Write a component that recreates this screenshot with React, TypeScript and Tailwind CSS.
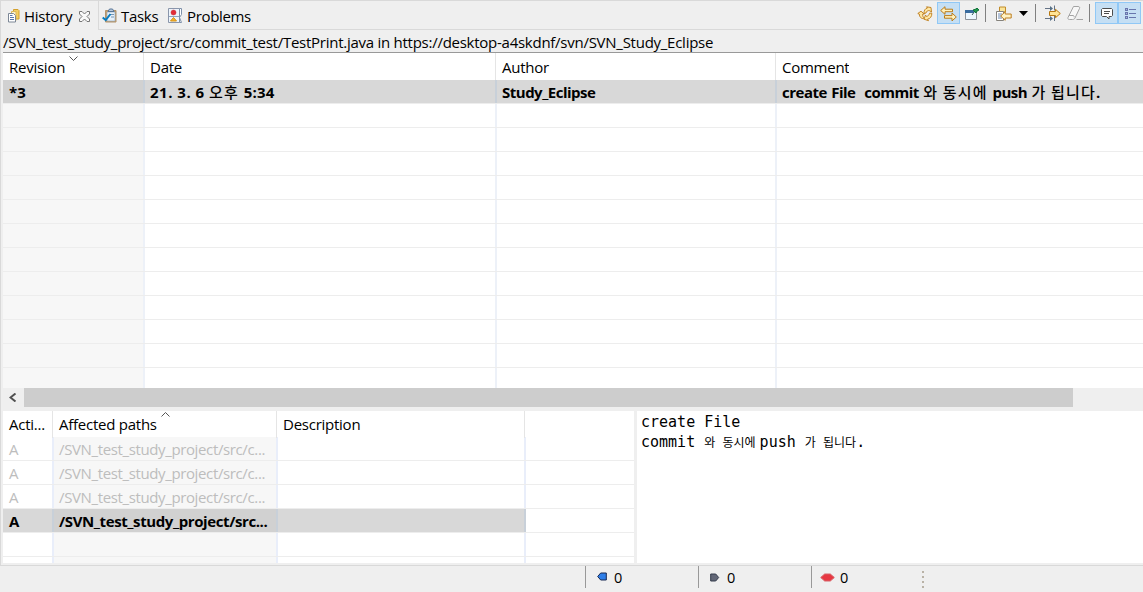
import type { ReactNode } from "react";

const CELL = "shrink-0 overflow-hidden whitespace-pre pl-[6px]";
const BODY_CELL = "shrink-0 overflow-hidden whitespace-pre pl-[5px]";

function Chevron({ up = false }: { up?: boolean }) {
  return (
    <svg width="9" height="5" viewBox="0 0 9 5" fill="none" stroke="#555" strokeWidth="1">
      <path d={up ? "M.5 4.5 4.5.5l4 4" : "M.5.5l4 4 4-4"} />
    </svg>
  );
}

function HistoryIcon() {
  return (
    <svg width="13" height="16" viewBox="0 0 13 16">
      <path d="M5.500 1.500h4.500l1 1v8.500h-5.500z" fill="#f4cf63" stroke="#d3a02e" />
      <path d="M3.500 3.500h4.500v9h-4.500z" fill="#fff4c8" stroke="#d9b75c" />
      <path d="M.5 5.500h5l2 2v6.500h-7z" fill="#fff" stroke="#7c8796" />
      <path d="M2 7.500h2.500M2 9.500h4M2 11.500h4" stroke="#5878ad" />
    </svg>
  );
}

function TasksIcon() {
  return (
    <svg width="16" height="16" viewBox="0 0 16 16">
      <path d="M3.500 2.500h10.500v11.500h-10.500z" fill="#c9a06c" stroke="#b3946c" />
      <path d="M5 4h8v9H5z" fill="#e5f0fa" stroke="#8ca4be" strokeWidth=".6" />
      <path d="M6 3.500 7.500 1h3L12 3.500z" fill="#b9cadd" stroke="#587596" />
      <path d="M8 6.500h4M9 9h3" stroke="#7994b2" />
      <path d="M.7 9.500 3.700 12l4.800-6" fill="none" stroke="#087dbf" strokeWidth="2" />
    </svg>
  );
}

function ProblemsIcon() {
  return (
    <svg width="15" height="16" viewBox="0 0 15 16">
      <path d="M.5.5h11v14H.5z" fill="#edf4fb" stroke="#8a96ab" />
      <path d="M11.500.5h2v6l-2 3 2 5h-2z" fill="#fff" stroke="#7e91aa" />
      <path d="M1 8.500h10" stroke="#91a5bd" />
      <circle cx="5.500" cy="4.500" r="2.500" fill="#e12d38" stroke="#c72835" strokeWidth=".5" />
      <path d="m5.500 9.500 3 3.500h-6z" fill="#f5b52c" stroke="#d69017" />
    </svg>
  );
}

function CloseIcon() {
  return (
    <svg width="11" height="11" viewBox="0 0 11 11" fill="#fafafa" stroke="#777" strokeWidth="1">
      <path d="M.5.500h2.500l2.500 2.500L8 .5h2.500V3L8 5.500 10.500 8v2.500H8L5.500 8 3 10.500H.5V8L3 5.500.5 3z" />
    </svg>
  );
}

function RefreshIcon() {
  return (
    <svg width="16" height="16" viewBox="0 0 16 16" fill="#ffe7a3" stroke="#bd7c18" strokeWidth=".9">
      <path d="M7 7.500C7 4.500 8 2.500 10.500 2L9.500.8 14 1.500 14.500 6l-1.700-1.200C10.500 4 9.500 5.500 9 7z" />
      <path d="M.8 7.500 4 5.200 7.200 8 5.500 8.300c.2 2 .8 3.200 2 4.200C4.500 13.200 2.300 11 2.300 8z" />
      <path d="M14.800 7.200c.2 3.300-1.600 5.500-4.300 6l1 1.500-4.500-1.500L8.500 9l1 1.500c1.800-.5 2.800-1.700 3-3.300z" />
    </svg>
  );
}

function LinkIcon() {
  return (
    <svg width="17" height="16" viewBox="0 0 17 16" fill="#fff1bd" stroke="#b97a18">
      <path d="M.7 4.500 5 .7v2.500h7.500v2.500H5v2.600z" />
      <path d="m16.300 11-4.300-4v2.600H4.500v2.600H12v2.700z" />
    </svg>
  );
}

function PinIcon() {
  return (
    <svg width="15" height="14" viewBox="0 0 15 14">
      <path d="M.5 3.500h11v9H.5z" fill="#edf7ff" stroke="#8c9299" />
      <path d="M0 3h9v3H0z" fill="#386b9f" />
      <path d="m7 8 3-4" stroke="#315f56" />
      <path d="m8 3 3 3 1-2 2-1-2-2-1 1z" fill="#20984f" stroke="#13743b" />
    </svg>
  );
}

function CompareIcon() {
  return (
    <svg width="16" height="16" viewBox="0 0 16 16">
      <path d="M3.500 1h6v5h-6z" fill="#fae499" stroke="#c18c2b" />
      <path d="M.5 5.500h7v9h-7z" fill="#fff" stroke="#85827c" />
      <path d="M2 8h4M2 10h4M2 12h4" stroke="#6a87b1" />
      <path d="m4.700 10 4.500-4.300V8h6v4h-6v2.300z" fill="#fff2c4" stroke="#bd7f20" />
    </svg>
  );
}

function MergeIcon() {
  return (
    <svg width="16" height="16" viewBox="0 0 16 16" fill="none">
      <path d="M0 3.500h6M0 13.500h6M9.500.5v5M9.500 11v5" stroke="#657386" />
      <path d="m5 1 3 2.500L5 6zM5 11l3 2.500L5 16z" fill="#557087" />
      <path d="M4.500 6.500h6V4.300L15.300 8.500l-4.800 4.200v-2.200h-6z" fill="#ffe496" stroke="#b77811" />
    </svg>
  );
}

function EraserIcon() {
  return (
    <svg width="17" height="15" viewBox="0 0 17 15" fill="#f7f7f7" stroke="#a3a3a3">
      <path d="M6.500.5h4.500c1.500 0 2 1 1.500 2L8 12c-.5 1-1.200 1.500-2.500 1.500H2.500C1 13.500.5 12.500 1 11.500z" />
      <path d="M2 9.500h4c1 0 1.300.8 1 1.700M9.500 13.500H16" fill="none" />
    </svg>
  );
}

function CommentIcon() {
  return (
    <svg width="13" height="13" viewBox="0 0 13 13" fill="#fff" stroke="#4d4d4d">
      <path d="M1.500.5h9l1 1v6l-1 1H8V11L5.500 8.500h-4l-1-1v-6zM3 3.500h6M3 5.500h5" />
    </svg>
  );
}

function ListIcon() {
  return (
    <svg width="12" height="12" viewBox="0 0 12 12" fill="#a8b3da" stroke="#6876ad" shapeRendering="crispEdges">
      <path d="M.5.500h2v2h-2zM.5 4.500h2v2h-2zM.5 8.500h2v2h-2zM4 1.500h7M4 5.500h7M4 9.500h7" />
    </svg>
  );
}

function Divider() {
  return <div className="h-[18px] w-px bg-[#808080]" />;
}

function Toolbar() {
  return (
    <div className="ml-auto flex h-[28px] items-start">
      <div className="mt-[5px]"><RefreshIcon /></div>
      <div className="ml-[4px] mt-px flex h-[22px] w-[23px] justify-center border border-[#90c8f6] bg-[#c5dff4] pt-[3px]"><LinkIcon /></div>
      <div className="ml-[5px] mt-[6px]"><PinIcon /></div>
      <div className="ml-[5px] mt-[3px]"><Divider /></div>
      <div className="ml-[10px] mt-[5px]"><CompareIcon /></div>
      <svg className="ml-[7px] mt-[10px]" width="9" height="5" viewBox="0 0 9 5"><path d="M0 0h9L4.500 5z" /></svg>
      <div className="ml-[7px] mt-[3px]"><Divider /></div>
      <div className="ml-[9px] mt-[4px]"><MergeIcon /></div>
      <div className="ml-[6px] mt-[5px]"><EraserIcon /></div>
      <div className="ml-[5px] mt-[3px]"><Divider /></div>
      <div className="ml-[5px] mt-px flex h-[22px] w-[23px] border border-[#90c8f6] bg-[#c5dff4] pl-[5px] pt-[5px]"><CommentIcon /></div>
      <div className="mr-[2px] mt-px flex h-[22px] w-[23px] border border-[#90c8f6] bg-[#c5dff4] pl-[6px] pt-[5px]"><ListIcon /></div>
    </div>
  );
}

function Tabs() {
  return (
    <div className="flex h-[30px] shrink-0 border-b border-t border-[#d9d9d9]">
      <div className="-mb-px flex h-[29px] w-[98px] border-r border-[#d9d9d9] bg-[#efefef] pl-[7px]">
        <div className="mt-[7px]"><HistoryIcon /></div>
        <span className="ml-[3px] w-[55px] leading-[31px] tracking-[-0.25px]">History</span>
        <div className="mt-[10px]"><CloseIcon /></div>
      </div>
      <div className="ml-[3px] mt-[7px]"><TasksIcon /></div>
      <span className="ml-[3px] w-[46px] leading-[31px] tracking-[-0.3px]">Tasks</span>
      <div className="ml-px mt-[7px]"><ProblemsIcon /></div>
      <span className="ml-[4px] leading-[31px] tracking-[-0.35px]">Problems</span>
      <Toolbar />
    </div>
  );
}

function HeaderCell({ width, leading, children }: { width: string; leading: string; children?: ReactNode }) {
  return <div className={`${CELL} relative h-[27px] border-r border-[#e5e5e5] tracking-[-0.25px] ${leading} ${width}`}>{children}</div>;
}

function Hangul({ children }: { children: ReactNode }) {
  return <span className="font-medium tracking-[1.2px] [word-spacing:-0.5px]">{children}</span>;
}

function HistoryRow({ selected = false }: { selected?: boolean }) {
  const edge = selected ? "border-[#c8d0d9]" : "border-[#edf1f8]";
  return (
    <div className={`flex h-[24px] shrink-0 border-b border-[#ededed] font-bold leading-[25px] ${selected ? "bg-[#d8d8d8]" : ""}`}>
      <div className={`${CELL} w-[142px] border-r-2 ${edge} ${selected ? "bg-[#d1d1d1]" : "bg-[#f7f7f7]"}`}>{selected && "*3"}</div>
      <div className={`${BODY_CELL} w-[352px] border-r-2 tracking-[0.5px] ${edge}`}>
        {selected && <>21. 3. 6 <Hangul>오후 </Hangul><span className="tracking-[0.2px]">5:34</span></>}
      </div>
      <div className={`${BODY_CELL} w-[280px] border-r-2 tracking-[-0.5px] ${edge}`}>{selected && "Study_Eclipse"}</div>
      <div className={`${BODY_CELL} w-[364px] tracking-[-0.5px] [word-spacing:1px]`}>
        {selected && <>create File  commit <Hangul>와 동시에 </Hangul>push <Hangul>가 됩니다</Hangul>.</>}
      </div>
    </div>
  );
}

function HistoryTable() {
  return (
    <div className="ml-[2px] flex h-[335px] shrink-0 flex-col overflow-hidden bg-white">
      <div className="flex h-[27px] shrink-0">
        <HeaderCell width="w-[141px]" leading="leading-[28px]">
          Revision
          <div className="absolute left-[66px] top-[3px]"><Chevron /></div>
        </HeaderCell>
        <HeaderCell width="w-[352px]" leading="leading-[28px]">Date</HeaderCell>
        <HeaderCell width="w-[280px]" leading="leading-[28px]">Author</HeaderCell>
        <div className={`${CELL} tracking-[-0.25px] leading-[28px]`}>Comment</div>
      </div>
      <HistoryRow selected />
      {Array.from({ length: 12 }, (_, i) => <HistoryRow key={i} />)}
    </div>
  );
}

function PathRow({ action = "", path = "", selected = false }: { action?: string; path?: string; selected?: boolean }) {
  const edge = selected ? "border-[#c8d0d9]" : "border-[#e9eefa]";
  return (
    <div className={`flex h-[24px] shrink-0 border-b border-[#ededed] leading-[25px] ${selected ? "font-bold text-black" : "text-[#bdbdbd]"}`}>
      <div className={`${CELL} w-[51px] border-r-2 ${edge} ${selected ? "bg-[#d8d8d8]" : ""}`}>{action}</div>
      <div className={`${BODY_CELL} w-[224px] border-r-2 ${edge} ${selected ? "bg-[#d1d1d1] tracking-[-0.4px]" : "bg-[#f7f7f7] tracking-[-0.37px]"}`}>{path}</div>
      <div className={`${CELL} w-[248px] border-r-2 ${edge} ${selected ? "bg-[#d8d8d8]" : ""}`} />
    </div>
  );
}

function PathsTable() {
  return (
    <div className="ml-[2px] flex h-[152px] w-[631px] flex-col overflow-hidden bg-white">
      <div className="flex h-[26px] shrink-0">
        <HeaderCell width="w-[50px]" leading="leading-[26px]">Acti...</HeaderCell>
        <HeaderCell width="w-[224px]" leading="leading-[26px]">
          Affected paths
          <div className="absolute left-[108px] top-px"><Chevron up /></div>
        </HeaderCell>
        <HeaderCell width="w-[248px]" leading="leading-[26px]">Description</HeaderCell>
      </div>
      <PathRow action="A" path="/SVN_test_study_project/src/c..." />
      <PathRow action="A" path="/SVN_test_study_project/src/c..." />
      <PathRow action="A" path="/SVN_test_study_project/src/c..." />
      <PathRow action="A" path="/SVN_test_study_project/src..." selected />
      <PathRow />
      <PathRow />
    </div>
  );
}

function StatusBar() {
  return (
    <div className="flex h-[26px] shrink-0 pl-[585px] text-[14.500px] leading-[24px]">
      <div className="flex h-[22px] w-[113px] border-l border-[#999] pl-[11px]">
        <svg className="mt-[6px]" width="10" height="9" viewBox="0 0 10 9"><path d="m.7 4.500 3-3.500h5.600v7H3.700z" fill="#2e7ee8" stroke="#182953" /></svg>
        <span className="ml-[7px]">0</span>
      </div>
      <div className="flex h-[22px] w-[113px] border-l border-[#999] pl-[11px]">
        <svg className="mt-[7px]" width="10" height="9" viewBox="0 0 10 9"><path d="M.7 1h5l3 3.500-3 3.500h-5z" fill="#626777" stroke="#343c4c" /></svg>
        <span className="ml-[7px]">0</span>
      </div>
      <div className="flex h-[22px] w-[111px] border-l border-[#999] pl-[8px]">
        <svg className="mt-[7px]" width="15" height="9" viewBox="0 0 15 9"><path d="m.7 4.500 4-3.500h5.600l4 3.500-4 3.500H4.700z" fill="#e73742" stroke="#d66368" /></svg>
        <span className="ml-[5px]">0</span>
      </div>
      <div className="mt-[5px] flex flex-col gap-[3px]">
        {Array.from({ length: 4 }, (_, i) => <div key={i} className="size-[2px] bg-[#b9b2a6]" />)}
      </div>
    </div>
  );
}

export default function App() {
  return (
    <div className="flex h-[592px] w-[1143px] flex-col overflow-hidden bg-[#efefef] font-['Open_Sans','Noto_Sans_CJK_KR',sans-serif] text-[15px] text-black">
      <div className="flex h-[566px] shrink-0 flex-col border-b border-l border-[#d9d9d9]">
        <Tabs />
        <div className="ml-[2px] h-[23px] shrink-0 whitespace-pre border-b border-[#999] leading-[24px] tracking-[-0.26px]">
          /SVN_test_study_project/src/commit_test/TestPrint.java in https://desktop-a4skdnf/svn/SVN_Study_Eclipse
        </div>
        <HistoryTable />
        <div className="ml-[2px] flex h-[19px] shrink-0">
          <div className="flex w-[21px] pl-[6px] pt-[5px]">
            <svg width="8" height="9" viewBox="0 0 8 9" fill="none" stroke="#505050" strokeWidth="2"><path d="m6.500.5-5 4 5 4" /></svg>
          </div>
          <div className="w-[1049px] bg-[#cdcdcd]" />
        </div>
        <div className="mt-[4px] flex h-[152px] shrink-0">
          <PathsTable />
          <div className="ml-[3px] flex-1 whitespace-pre bg-white pl-[4px] pt-px font-['DejaVu_Sans_Mono','Noto_Sans_CJK_KR',monospace] text-[15px] leading-[20px]">
            <div>create File</div>
            <div>commit <span className="text-[12px]">와 동시에</span><span className="ml-[4px]">push </span><span className="text-[12px]">가 됩니다</span>.</div>
          </div>
        </div>
      </div>
      <StatusBar />
    </div>
  );
}
